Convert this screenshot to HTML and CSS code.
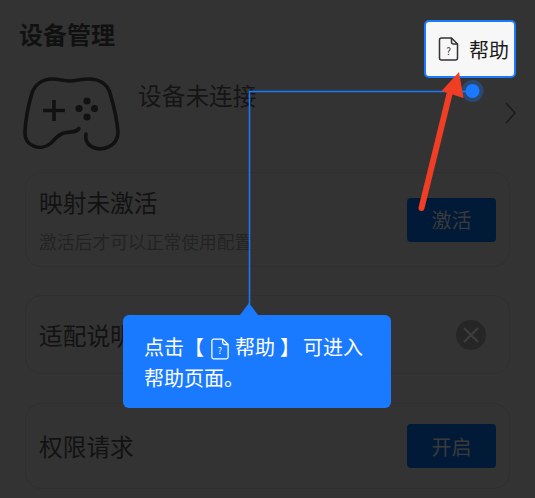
FILE: index.html
```html
<!DOCTYPE html>
<html lang="zh-CN">
<head>
    <meta charset="UTF-8">
    <meta name="viewport" content="width=device-width, initial-scale=1.0">
    <title>设备管理</title>
    <link rel="stylesheet" href="styles.css">
</head>
<body>
    <main class="page">
        <h1 class="page-title">设备管理</h1>

        <section class="device">
            <svg class="gamepad" width="100" height="80" viewBox="22 76 100 80">
                <path d="M79 128.5C77 132 72 132 66 132.500C60 133 56 138 51 143C41 152 24 146 25 132C25.500 120 29 103 32 93C35 84 43 79 52 79C60 79 63 81 70 81C77 81 80 79 89 79C99 79 107 84 110 93C113 103 117 120 118 132C118 146 103 152 92 147C87 144 85 139 86 134" fill="none" stroke="#111" stroke-width="3.6" stroke-linecap="round"/>
                <path d="M43 110.500h22M54 100v21" fill="none" stroke="#111" stroke-width="3.600"/>
                <circle cx="79" cy="108.500" r="3.600" fill="#111"/>
                <circle cx="87" cy="101" r="3.600" fill="#111"/>
                <circle cx="94.500" cy="108.500" r="3.600" fill="#111"/>
                <circle cx="87" cy="117" r="3.600" fill="#111"/>
            </svg>
            <span class="device-name">设备未连接</span>
            <svg class="chevron" width="13" height="24" viewBox="0 0 13 24">
                <path d="M2 2l9 10-9 10" fill="none" stroke="#1c1c1c" stroke-width="1.500"/>
            </svg>
        </section>

        <section class="card card-activate">
            <div>
                <div class="card-label">映射未激活</div>
                <div class="card-note">激活后才可以正常使用配置</div>
            </div>
            <button class="action-btn">激活</button>
        </section>

        <section class="card card-guide">
            <div class="card-label">适配说明</div>
            <span class="close-btn">
                <svg width="18" height="18" viewBox="0 0 18 18">
                    <path d="M2 2l14 14M16 2L2 16" fill="none" stroke="#3d3d3d" stroke-width="2.400"/>
                </svg>
            </span>
        </section>

        <section class="card card-permission">
            <div class="card-label">权限请求</div>
            <button class="action-btn">开启</button>
        </section>
    </main>

    <!-- guide overlay -->
    <svg class="guide-lines" width="535" height="498" viewBox="0 0 535 498">
        <path d="M249.500 305V91.500H472" fill="none" stroke="#1a7aff" stroke-width="1.500"/>
        <circle cx="472.500" cy="91" r="11" fill="#1a7aff" fill-opacity="0.3"/>
        <circle cx="472.500" cy="91" r="7" fill="#1a7aff"/>
    </svg>

    <div class="help-box">
        <svg class="help-icon" width="21" height="24" viewBox="0 0 20 24">
            <path d="M3 1h10l6 6v14a2 2 0 0 1-2 2H3a2 2 0 0 1-2-2V3a2 2 0 0 1 2-2z" fill="none" stroke="currentColor" stroke-width="1.500" stroke-linejoin="round"/>
            <path d="M13 1v4a2 2 0 0 0 2 2h4" fill="none" stroke="currentColor" stroke-width="1.500"/>
            <text x="10" y="18" text-anchor="middle" font-size="10" fill="currentColor">?</text>
        </svg>
        <span>帮助</span>
    </div>

    <svg class="guide-arrow" width="535" height="498" viewBox="0 0 535 498">
        <path d="M421.500 208L450 92" fill="none" stroke="#f03e24" stroke-width="6" stroke-linecap="round"/>
        <path d="M459 72L441.500 91L463.500 98z" fill="#f03e24"/>
    </svg>

    <div class="tip">
        <span class="tip-text">点击<span class="bracket-l">【</span><svg class="tip-icon" width="18" height="22" viewBox="0 0 20 24">
            <path d="M3 1h10l6 6v14a2 2 0 0 1-2 2H3a2 2 0 0 1-2-2V3a2 2 0 0 1 2-2z" fill="none" stroke="currentColor" stroke-width="1.400" stroke-linejoin="round"/>
            <path d="M13 1v4a2 2 0 0 0 2 2h4" fill="none" stroke="currentColor" stroke-width="1.400"/>
            <text x="10" y="18" text-anchor="middle" font-size="10" fill="currentColor">?</text>
        </svg>帮助<span class="bracket-r">】</span>可进入</span>
        <span class="tip-text">帮助页面。</span>
    </div>
</body>
</html>
```

FILE: styles.css
```css
* {
    margin: 0;
    padding: 0;
    box-sizing: border-box;
}

body {
    position: relative;
    width: 535px;
    height: 498px;
    overflow: hidden;
    background: #333333;
    color: #111111;
    font-family: "Noto Sans CJK SC", "Liberation Sans", sans-serif;
}

.page {
    display: flex;
    flex-direction: column;
    padding: 18px 25px 0;
}

.page-title {
    margin-left: -6px;
    font-size: 24px;
    line-height: 32px;
    font-weight: 700;
}

.device {
    display: flex;
    align-items: flex-start;
    height: 96px;
    margin-top: 26px;
}

.gamepad {
    margin-left: -3px;
    flex-shrink: 0;
}

.device-name {
    margin-left: 16px;
    margin-top: 2px;
    font-size: 23.700px;
    line-height: 34px;
    color: #151515;
}

.chevron {
    margin-left: auto;
    margin-top: 25px;
    margin-right: -7px;
}

.card {
    display: flex;
    align-items: center;
    justify-content: space-between;
    padding: 0 13px 0 13px;
    border: 1px solid #2f2f2f;
    border-radius: 16px;
}

.card-activate {
    height: 95px;
}

.card-guide {
    height: 79px;
    margin-top: 28px;
}

.card-permission {
    height: 86px;
    margin-top: 29px;
}

.card-label {
    font-size: 23.700px;
    line-height: 34px;
    color: #121212;
}

.card-note {
    margin-top: 9px;
    font-size: 17.800px;
    line-height: 26px;
    color: #232323;
}

.action-btn {
    width: 89px;
    height: 44px;
    border: none;
    border-radius: 4px;
    background: #011a37;
    color: #3a3a3a;
    font-family: inherit;
    font-size: 20px;
}

.close-btn {
    display: flex;
    align-items: center;
    justify-content: center;
    width: 30px;
    height: 30px;
    margin-right: 10px;
    border-radius: 50%;
    background: #262626;
}

.guide-lines,
.guide-arrow {
    position: absolute;
    top: 0;
    left: 0;
}

.help-box {
    position: absolute;
    top: 20px;
    left: 424px;
    display: flex;
    align-items: center;
    width: 92px;
    height: 58px;
    padding-left: 12px;
    border: 2px solid #1a7aff;
    border-radius: 5px;
    background: #f7f7f7;
    color: #1a1a1a;
    font-size: 20px;
}

.help-icon {
    margin-right: 10px;
    color: #333333;
}

.tip {
    position: absolute;
    top: 315px;
    left: 123px;
    display: flex;
    flex-direction: column;
    width: 268px;
    height: 93px;
    padding: 16px 21px;
    border-radius: 6px;
    background: #1a7aff;
    color: #ffffff;
    font-size: 20px;
    line-height: 31px;
}

.tip::before {
    content: "";
    position: absolute;
    top: -12px;
    left: 117px;
    border-left: 9px solid transparent;
    border-right: 9px solid transparent;
    border-bottom: 12px solid #1a7aff;
}

.tip-text {
    display: block;
    white-space: nowrap;
}

.tip-icon {
    margin: 0 6px 0 7px;
    vertical-align: -5px;
}

.bracket-r {
    margin: 0 3px 0 5px;
}
```
